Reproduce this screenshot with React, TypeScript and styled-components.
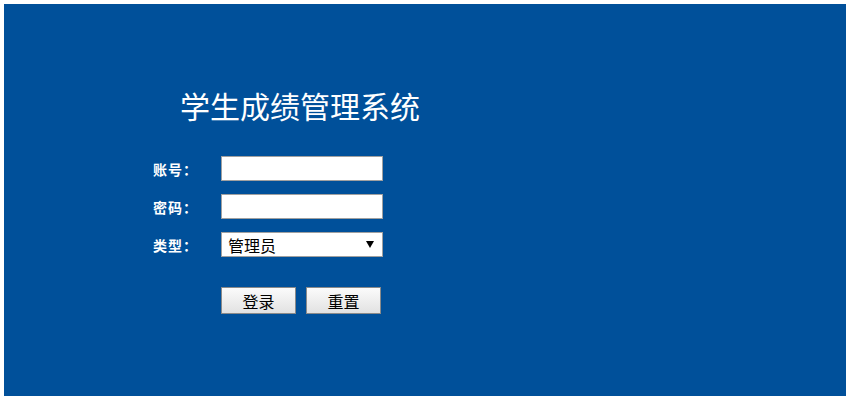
import styled, { createGlobalStyle } from 'styled-components';

const GlobalStyle = createGlobalStyle`
    body {
        margin: 4px;
        font-family: "Liberation Sans", "Noto Sans CJK SC", sans-serif;
    }
`;

const Panel = styled.div`
    width: 842px;
    height: 392px;
    box-sizing: border-box;
    background-color: #00509a;
    padding: 83px 0 0 149px;
`;

const Title = styled.h1`
    margin: 0 0 33px 27px;
    font-family: "Noto Sans CJK SC", sans-serif;
    font-weight: normal;
    font-size: 30px;
    line-height: 36px;
    color: #ffffff;
`;

const Form = styled.form`
    display: grid;
    grid-template-columns: 68px 162px;
    row-gap: 13px;
    align-items: center;
`;

const Label = styled.label`
    font-family: "Noto Sans CJK SC", sans-serif;
    font-size: 14px;
    font-weight: bold;
    color: #ffffff;
    letter-spacing: 1px;
`;

const Field = styled.input`
    display: block;
    box-sizing: border-box;
    width: 162px;
    height: 25px;
    margin: 0;
    border: 1px solid #a0a0a0;
    background: #ffffff;
    outline: none;
`;

const SelectWrap = styled.div`
    position: relative;
    width: 162px;
    height: 25px;
`;

const Select = styled.select`
    display: block;
    appearance: none;
    box-sizing: border-box;
    width: 162px;
    height: 25px;
    margin: 0;
    padding: 0 0 0 6px;
    border: 1px solid #a0a0a0;
    border-radius: 0;
    background: #ffffff;
    font-family: "Noto Sans CJK SC", sans-serif;
    font-size: 16px;
    color: #000000;
    outline: none;
`;

const Arrow = styled.span`
    position: absolute;
    right: 9px;
    top: 9px;
    width: 0;
    height: 0;
    border-left: 4px solid transparent;
    border-right: 4px solid transparent;
    border-top: 7px solid #000000;
    pointer-events: none;
`;

const Actions = styled.div`
    grid-column: 2;
    display: flex;
    gap: 10px;
    margin-top: 17px;
`;

const Button = styled.button`
    box-sizing: border-box;
    width: 75px;
    height: 27px;
    margin: 0;
    padding: 0;
    border: 1px solid #8a8a8a;
    background: linear-gradient(#fbfbfb, #e2e2e2);
    font-family: "Noto Sans CJK SC", sans-serif;
    font-size: 16px;
    color: #000000;
    cursor: pointer;
`;

export default function App() {
    return (
        <>
            <GlobalStyle />
            <Panel>
                <Title>学生成绩管理系统</Title>
                <Form onSubmit={(e) => e.preventDefault()}>
                    <Label htmlFor="account">账号：</Label>
                    <Field id="account" type="text" />
                    <Label htmlFor="password">密码：</Label>
                    <Field id="password" type="password" />
                    <Label htmlFor="role">类型：</Label>
                    <SelectWrap>
                        <Select id="role" defaultValue="admin">
                            <option value="admin">管理员</option>
                            <option value="teacher">教师</option>
                            <option value="student">学生</option>
                        </Select>
                        <Arrow />
                    </SelectWrap>
                    <Actions>
                        <Button type="submit">登录</Button>
                        <Button type="reset">重置</Button>
                    </Actions>
                </Form>
            </Panel>
        </>
    );
}
